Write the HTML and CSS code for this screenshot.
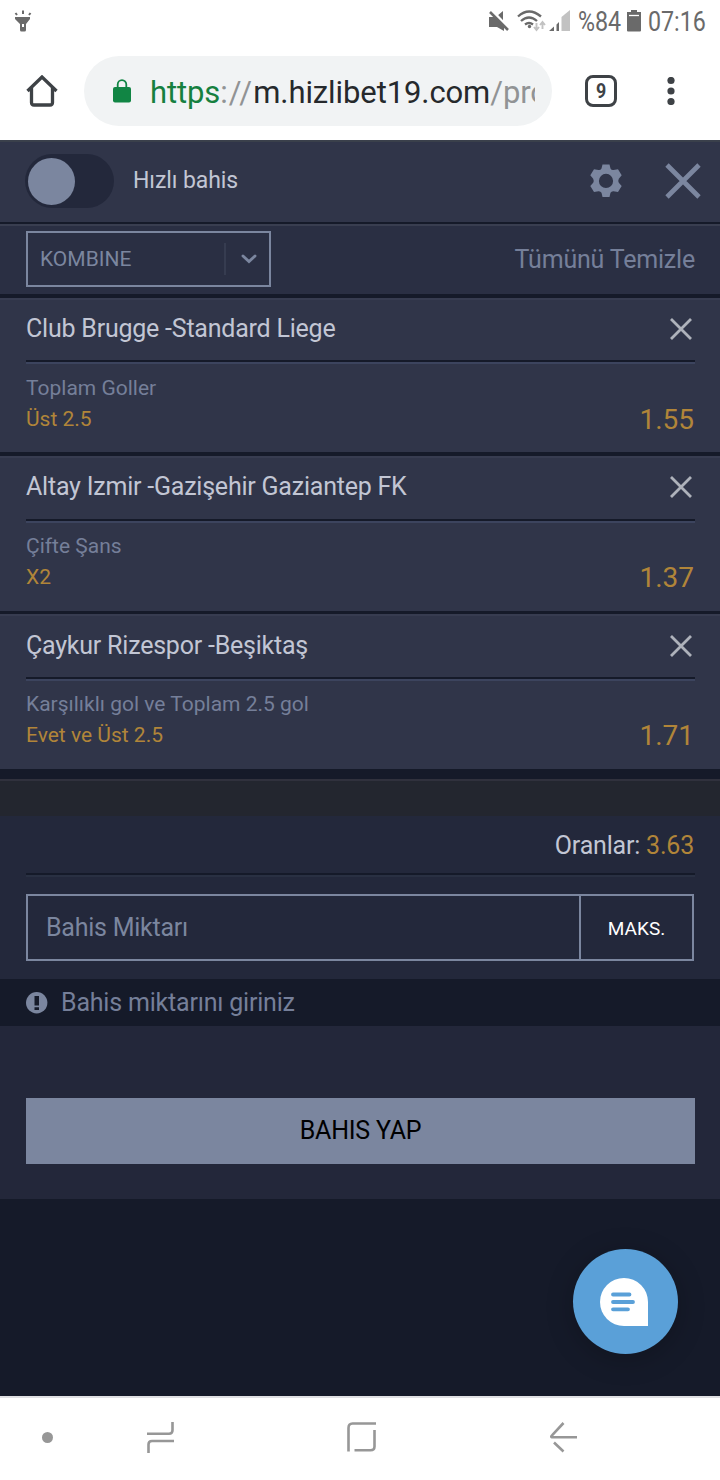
FILE: index.html
```html
<!DOCTYPE html>
<html lang="tr">
<head>
<meta charset="utf-8">
<title>Hızlıbet</title>
<link rel="stylesheet" href="styles.css">
</head>
<body>
<header class="status">
  <svg class="torch" width="18" height="24" viewBox="0 0 18 24"><path fill="#6a6a6a" fill-rule="evenodd" d="M1 7h15v2l-4 5v6q0 1.500-1.500 1.500h-3Q6 21.500 6 20v-6L1 9zM8 14v3h2v-3z"/><path d="M9 .5v3.500M1.500 3l1.500 2M16.500 3l-1.500 2" stroke="#6a6a6a" stroke-width="2"/></svg>
  <svg class="signals" width="84" height="26" viewBox="0 0 84 26">
    <g fill="#6a6a6a"><path d="M1 7h6l9 9v5L9 17H1zM9 6l6-5v11z"/></g>
    <path d="M4 0l18 19" stroke="#fff" stroke-width="2"/><path d="M2 2l18 18" stroke="#6a6a6a" stroke-width="2.500"/>
    <g fill="none" stroke="#6a6a6a" stroke-width="2.300"><path d="M30 6.500Q41-3.500 53 6.500M33 11Q41 4 49 11M37 14.500q4-3 8 0"/></g><circle cx="41.500" cy="16.500" r="1.700" fill="#6a6a6a"/>
    <g stroke="#c2c2c2" stroke-width="1.900" fill="none"><path d="M48.500 13v6M46 17l2.500 3 2.500-3M54.500 19v-6M52 15l2.500-3 2.500 3"/></g>
    <path fill="#c2c2c2" d="M73.500 7L82 0v21h-8.500z"/><path fill="#6a6a6a" d="M61 21l5-4.500V21zM68.500 14.500l2.500-2.500v9h-2.500z"/>
  </svg>
  <span class="stat-text pct">%84</span>
  <svg class="battery" width="14" height="22" viewBox="0 0 14 22"><path fill="#6a6a6a" d="M0 2h4V0h6v2h4v18.500q0 1-1 1H1q-1 0-1-1z"/><path d="M2 5.500h10" stroke="#fff" stroke-width="1.300"/></svg>
  <span class="stat-text clock">07:16</span>
</header>
<nav class="browser">
  <svg class="home" width="32" height="32" viewBox="0 0 32 32"><path d="M1.500 16L16 2l14.500 14M5.500 13v14.500q0 2.500 2.500 2.500h16q2.500 0 2.500-2.500V13" fill="none" stroke="#3e4246" stroke-width="3.300"/></svg>
  <div class="omnibox">
    <svg width="18" height="24" viewBox="0 0 18 24"><path d="M4.700 9V5.500a4.300 4.300 0 0 1 8.600 0V9" fill="none" stroke="#118544" stroke-width="1.800"/><rect y="8" width="18" height="15.500" rx="2" fill="#118544"/></svg>
    <div class="url"><b class="secure">https</b><i class="sep">://</i>m.hizlibet19.com<i>/pro</i></div>
  </div>
  <div class="tabs"><span>9</span></div>
  <svg class="dots" width="8" height="28" viewBox="0 0 8 28"><g fill="#3e4246"><circle cx="4" cy="3.500" r="3.600"/><circle cx="4" cy="14" r="3.600"/><circle cx="4" cy="24.500" r="3.600"/></g></svg>
</nav>
<main>
  <section class="quick">
    <span class="switch"><span class="knob"></span></span>
    <span class="quick-label">Hızlı bahis</span>
    <svg class="gear" width="34" height="34" viewBox="0 0 34 34"><path fill="#7b869f" fill-rule="evenodd" d="M13.500.500h7l1 4q1 1.800 3 1.500l4.500-.8 3.700 6-2.900 3.600q-1 2 0 4l2.900 3.200-3.700 6-4.500-.8q-2-.2-3 1.500l-1 4.300h-7l-1-4.300q-1-1.700-3-1.500L5 28l-3.700-6 2.900-3.200q1-2 0-4L1.300 11.200 5 5.200 9.500 6q2 .300 3-1.500zM17 9.800a7.100 7.100 0 1 0 0 14.200 7.100 7.100 0 0 0 0-14.200z"/></svg>
    <svg class="close" width="36" height="36" viewBox="0 0 36 36"><path d="M2 2l32 32M34 2L2 34" stroke="#7b869f" stroke-width="4.700"/></svg>
  </section>
  <section class="filter">
    <div class="select"><span>KOMBINE</span><svg width="16" height="10" viewBox="0 0 16 10"><path d="M2 2l6 5.500L14 2" fill="none" stroke="#7b869f" stroke-width="2.900" stroke-linecap="round"/></svg></div>
    <span class="clear">Tümünü Temizle</span>
  </section>
  <article class="bet">
    <div class="match"><span>Club Brugge -Standard Liege</span><svg width="22" height="22" viewBox="0 0 22 22"><path d="M1 1l20 20M21 1L1 21"/></svg></div>
    <div class="pick"><div><p>Toplam Goller</p><p class="gold">Üst 2.5</p></div><span class="odd">1.55</span></div>
  </article>
  <article class="bet tall">
    <div class="match"><span>Altay Izmir -Gazişehir Gaziantep FK</span><svg width="22" height="22" viewBox="0 0 22 22"><path d="M1 1l20 20M21 1L1 21"/></svg></div>
    <div class="pick"><div><p>Çifte Şans</p><p class="gold">X2</p></div><span class="odd">1.37</span></div>
  </article>
  <article class="bet tall last">
    <div class="match"><span>Çaykur Rizespor -Beşiktaş</span><svg width="22" height="22" viewBox="0 0 22 22"><path d="M1 1l20 20M21 1L1 21"/></svg></div>
    <div class="pick"><div><p>Karşılıklı gol ve Toplam 2.5 gol</p><p class="gold">Evet ve Üst 2.5</p></div><span class="odd">1.71</span></div>
  </article>
  <div class="strip"></div>
  <section class="stake">
    <div class="total"><span>Oranlar: <em>3.63</em></span></div>
    <div class="amount"><span class="field">Bahis Miktarı</span><span class="max">MAKS.</span></div>
  </section>
  <div class="notice"><svg width="22" height="22" viewBox="0 0 22 22"><circle cx="10.700" cy="10.700" r="10.700" fill="#7b869f"/><path d="M8.500 4h4.500v9.500H8.500zM8.500 15.300h4.500V18H8.500z" fill="#151a29"/></svg><span>Bahis miktarını giriniz</span></div>
  <section class="submit"><div class="button">BAHIS YAP</div></section>
  <section class="rest">
    <div class="chat"><svg width="48" height="48" viewBox="0 0 48 48"><path fill="#fff" d="M24 0a24 24 0 0 1 24 24v24H24a24 24 0 0 1 0-48z"/><path d="M13 16.500h16.500M13 24h20M13 31.300h15" stroke="#5aa0d8" stroke-width="3.800" stroke-linecap="round"/></svg></div>
  </section>
</main>
<footer class="navbar">
  <span class="dot"></span>
  <svg class="recent" width="28" height="32" viewBox="0 0 28 32"><path d="M0 12.700h22q3.500 0 3.500-3.500V1M1.500 32v-8.500q0-3.500 3.500-3.500h22"/></svg>
  <svg class="square" width="30" height="30" viewBox="0 0 30 30"><path d="M1.500 29.500V6q0-4.500 4-4.500h23.500M27.500 8v16.500q0 3.800-4 3.800H7.500"/></svg>
  <svg class="back" width="28" height="32" viewBox="0 0 28 32"><path d="M27 16.300H2q-1.500-.5 0-2L13.500 2M4 21.500l9.500 9"/></svg>
</footer>
</body>
</html>
```
FILE: styles.css
```css
* { box-sizing: border-box; }
body { margin: 0; width: 720px; height: 1480px; background: #fff; font-family: Roboto, sans-serif; overflow: hidden; }
svg { display: block; flex: none; }
p { margin: 0; }
span { white-space: nowrap; }
.status { height: 42px; display: flex; align-items: flex-start; padding: 10px 14px 0; color: #6a6a6a; }
.signals { margin-left: 456px; }
.stat-text { font-size: 27px; line-height: 25px; transform: scaleX(.86); transform-origin: 0 0; flex: none; }
.pct { width: 41px; margin-left: 6px; }
.battery { margin-left: 8px; }
.clock { width: 57px; margin-left: 7px; }
.browser { height: 98px; display: flex; align-items: center; padding: 0 0 0 26px; }
.omnibox { width: 468px; height: 70px; margin-left: 26px; border-radius: 35px; background: #f1f3f4; display: flex; align-items: center; padding: 0 17px 0 29px; }
.url { flex: 1; margin-left: 19px; padding-top: 3px; overflow: hidden; font-size: 31px; line-height: 44px; letter-spacing: -.1px; color: #26292c; white-space: nowrap; }
.url i { font-style: normal; color: #919395; }
.url .sep { letter-spacing: 1.1px; }
.url b { font-weight: 400; color: #16803f; }
.tabs { width: 32px; height: 32px; margin-left: 33px; border: 3.6px solid #3e4246; border-radius: 8px; display: flex; align-items: center; justify-content: center; color: #3e4246; font-size: 21px; font-weight: 700; }
.tabs span { transform: scaleX(.85); }
.dots { margin-left: 50px; }
main { height: 1256px; background: #151a29; }
.quick { height: 82px; background: #303549; border-top: 2px solid #3a404b; display: flex; align-items: center; padding: 0 0 3px 25px; }
.switch { width: 89px; height: 54px; border-radius: 27px; background: #23283b; padding: 4px 3px; }
.knob { display: block; width: 47px; height: 47px; border-radius: 50%; background: #7b869f; }
.quick-label { width: 105px; margin-left: 19px; color: #c2c6d4; font-size: 23px; letter-spacing: -.1px; }
.gear { margin-left: 350.5px; }
.close { margin-left: 42px; }
.filter { margin-top: 2px; height: 70px; background: #2a2f43; border-top: 2px solid #393e50; display: flex; align-items: center; justify-content: space-between; padding: 0 25px 2px 26px; }
.select { width: 245px; height: 56px; border: 2px solid #7b869f; display: flex; align-items: center; justify-content: space-between; padding: 0 12px 0 12px; color: #7b869f; font-size: 21px; }
.select span { flex: 1; }
.select svg { box-sizing: content-box; padding: 11px 0 11px 15px; border-left: 2px solid #363c50; }
.clear { color: #757f99; font-size: 25px; letter-spacing: -.2px; }
.bet { height: 154px; margin-top: 4px; background: #303549; border-top: 2px solid #373c50; padding: 0 25px 0 26px; }
.tall { height: 155px; }
.last { margin-top: 3px; }
.match { height: 64px; border-bottom: 2px solid #3c445e; box-shadow: inset 0 -2px #151a29; display: flex; justify-content: space-between; align-items: flex-start; padding: 16px 3.5px 0 0; color: #c2c6d4; font-size: 25px; letter-spacing: -.22px; line-height: 26px; }
.match svg { margin-top: 2px; stroke: #aeb2bb; stroke-width: 2.8; fill: none; }
.tall .match { height: 65px; }
.last .match { padding-top: 17px; }
.pick { display: flex; justify-content: space-between; align-items: flex-end; padding: 9px 1px 0 0; font-size: 21px; line-height: 31px; color: #757f99; }
.tall .pick { padding-top: 8px; }
.gold, .odd, em { color: #b18539; }
.odd { font-size: 28px; }
.strip { height: 37px; margin-top: 10px; border-top: 2px solid #30313d; background: #23262f; }
.stake { height: 163px; background: #23283b; padding: 0 25px 0 26px; }
.total { height: 61px; border-bottom: 2px solid #293042; box-shadow: inset 0 -2px #151a29; display: flex; justify-content: flex-end; padding: 15px 1px 0 0; color: #c2c6d4; font-size: 25px; letter-spacing: -.2px; line-height: 30px; }
em { font-style: normal; }
.amount { width: 668px; height: 67px; margin-top: 17px; border: 2px solid #7b869f; display: flex; align-items: center; }
.field { flex: 1; padding-left: 18px; color: #7b869f; font-size: 25px; letter-spacing: -.25px; }
.max { width: 113px; height: 63px; border-left: 2px solid #7b869f; color: #fff; font-size: 19px; line-height: 65px; text-align: center; }
.notice { height: 47px; display: flex; align-items: center; padding-left: 26px; color: #757f99; font-size: 25px; letter-spacing: -.2px; }
.notice span { margin-left: 13px; }
.submit { height: 173px; background: #23273a; padding: 72px 25px 0 26px; }
.button { height: 66px; background: #7b869f; color: #000; font-size: 25px; letter-spacing: -.2px; line-height: 65px; text-align: center; }
.rest { padding: 50px 42px 0; display: flex; justify-content: flex-end; }
.chat { width: 105px; height: 105px; border-radius: 50%; background: #5aa0d8; display: flex; align-items: center; padding: 0 0 0 27px; box-shadow: 0 5px 28px rgba(0,0,0,.22); }
.navbar { height: 84px; border-top: 2px solid #e0e0e3; display: flex; align-items: center; padding: 0 0 4px 42px; background: #fff; }
.navbar svg { fill: none; stroke: #979797; stroke-width: 2.6; }
.dot { width: 11px; height: 11px; border-radius: 50%; background: #979797; }
.recent { margin-left: 94px; }
.square { margin-left: 172px; }
.back { margin-left: 173px; }
```
